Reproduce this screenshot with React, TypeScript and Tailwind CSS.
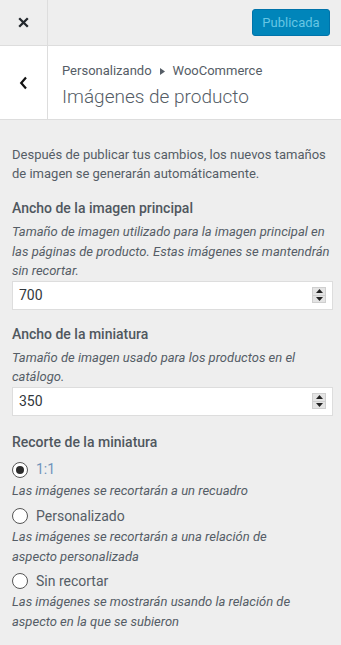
import React from "react";

function Spinner() {
  return (
    <div className="flex flex-col w-[14px] h-[16px] bg-[#e4e4e4] border border-[#cfcfcf]">
      <div className="flex-1 flex items-center justify-center border-b border-[#cfcfcf]">
        <svg width="7" height="4" viewBox="0 0 7 4"><path d="M0 4 L3.5 0 L7 4 Z" fill="#222" /></svg>
      </div>
      <div className="flex-1 flex items-center justify-center">
        <svg width="7" height="4" viewBox="0 0 7 4"><path d="M0 0 L3.5 4 L7 0 Z" fill="#222" /></svg>
      </div>
    </div>
  );
}

function NumberInput({ value }: { value: string }) {
  return (
    <div className="w-[321px] h-[29px] bg-white border border-[#dddddd] flex items-center justify-between pl-[6px] pr-[6px]">
      <span className="text-[14px] text-[#32373c]">{value}</span>
      <Spinner />
    </div>
  );
}

function Radio({ checked, label, labelClass }: { checked?: boolean; label: string; labelClass: string }) {
  return (
    <div className="flex items-center h-[22px]">
      <div className="w-[16px] h-[16px] rounded-full border border-[#555] bg-white flex items-center justify-center">
        {checked && <div className="w-[8px] h-[8px] rounded-full bg-[#2b2b2b]" />}
      </div>
      <span className={`ml-[8px] text-[14px] ${labelClass}`}>{label}</span>
    </div>
  );
}

function Desc({ children }: { children: React.ReactNode }) {
  return <p className="text-[13px] leading-[19.5px] italic text-[#555d66]">{children}</p>;
}

function Heading({ children, mt }: { children: React.ReactNode; mt: string }) {
  return <div className={`${mt} text-[14px] leading-[20px] font-medium text-[#50575e]`}>{children}</div>;
}

export default function App() {
  return (
    <div className="w-[341px] h-[645px] bg-[#eeeeee] text-[#555d66] overflow-hidden font-['Roboto',sans-serif]">
      <div className="h-[46px] flex border-b border-[#dddddd]">
        <div className="w-[48px] border-r border-[#dddddd] flex items-center justify-center">
          <svg width="11" height="11" viewBox="0 0 11 11">
            <path d="M1.2 1.2 L9.8 9.8 M9.8 1.2 L1.2 9.8" stroke="#23282d" strokeWidth="2.3" />
          </svg>
        </div>
        <div className="flex-1 flex items-center justify-end pr-[11px]">
          <div className="w-[78px] h-[27px] rounded-[3px] bg-[#0085ba] border border-[#0073aa] flex items-center justify-center text-[13px] text-[#66c6e4]">
            Publicada
          </div>
        </div>
      </div>
      <div className="h-[74px] bg-white flex border-b border-[#dddddd]">
        <div className="w-[48px] border-r border-[#dddddd] flex items-center justify-center">
          <svg width="9" height="14" viewBox="0 0 9 14">
            <path d="M7 1.5 L2.2 7 L7 12.5" stroke="#111" strokeWidth="2.2" fill="none" />
          </svg>
        </div>
        <div className="pl-[14px] pt-[16px]">
          <div className="text-[13px] leading-[18px] text-[#555d66] flex items-center">
            Personalizando
            <svg className="mx-[8px]" width="5" height="7" viewBox="0 0 5 7"><path d="M0 0 L5 3.5 L0 7 Z" fill="#555d66" /></svg>
            WooCommerce
          </div>
          <div className="text-[19px] leading-[26px] font-light text-[#555d66] mt-[4px]">Imágenes de producto</div>
        </div>
      </div>
      <div className="pl-[12px] pt-[25px]">
        <p className="text-[13px] leading-[19px] text-[#555d66]">
          Después de publicar tus cambios, los nuevos tamaños
          <br />
          de imagen se generarán automáticamente.
        </p>
        <Heading mt="mt-[15px]">Ancho de la imagen principal</Heading>
        <div className="mt-[4px]">
          <Desc>
            Tamaño de imagen utilizado para la imagen principal en
            <br />
            las páginas de producto. Estas imágenes se mantendrán
            <br />
            sin recortar.
          </Desc>
        </div>
        <NumberInput value="700" />
        <Heading mt="mt-[14px]">Ancho de la miniatura</Heading>
        <div className="mt-[4px]">
          <Desc>
            Tamaño de imagen usado para los productos en el
            <br />
            catálogo.
          </Desc>
        </div>
        <NumberInput value="350" />
        <Heading mt="mt-[16px]">Recorte de la miniatura</Heading>
        <div className="mt-[7px]">
          <Radio checked label="1:1" labelClass="text-[#6f94bb]" />
          <Desc>Las imágenes se recortarán a un recuadro</Desc>
        </div>
        <div className="mt-[5px]">
          <Radio label="Personalizado" labelClass="text-[#555d66]" />
          <Desc>
            Las imágenes se recortarán a una relación de
            <br />
            aspecto personalizada
          </Desc>
        </div>
        <div className="mt-[4px]">
          <Radio label="Sin recortar" labelClass="text-[#555d66]" />
          <Desc>
            Las imágenes se mostrarán usando la relación de
            <br />
            aspecto en la que se subieron
          </Desc>
        </div>
      </div>
    </div>
  );
}
